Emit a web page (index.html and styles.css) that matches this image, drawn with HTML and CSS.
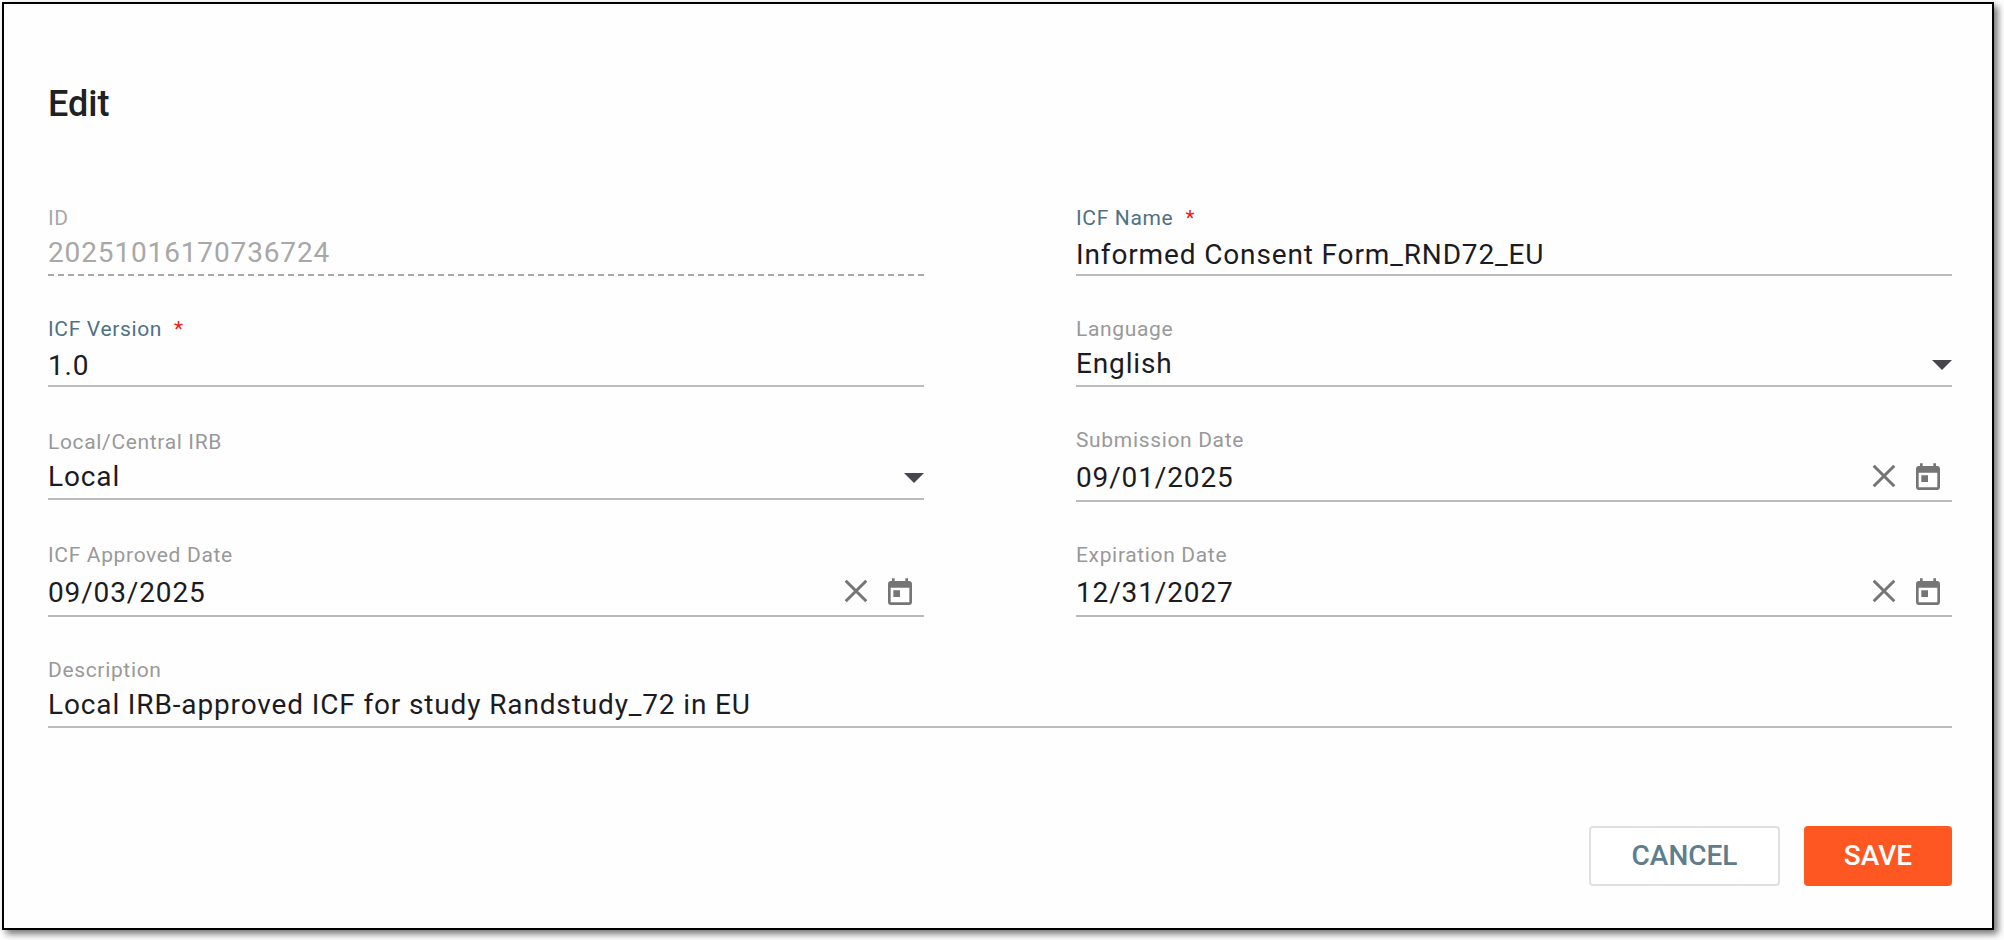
FILE: index.html
```
<!DOCTYPE html>
<html lang="en">
<head>
    <meta charset="UTF-8">
    <meta name="viewport" content="width=device-width, initial-scale=1.0">
    <title>Edit</title>
    <link rel="stylesheet" href="styles.css">
</head>
<body>
    <!-- Icons -->
    <svg class="sprite" width="0" height="0">
        <symbol id="icon-arrow" viewBox="0 0 20 10"><path d="M0 0h20L10 10z"/></symbol>
        <symbol id="icon-clear" viewBox="0 0 32 32"><path d="M5.7 3.7l20.6 20.6M26.3 3.7L5.7 24.3" fill="none" stroke="currentColor" stroke-width="3"/></symbol>
        <symbol id="icon-today" viewBox="0 0 24 24"><path d="M19 3h-1V1h-2v2H8V1H6v2H5c-1.11 0-1.99.9-1.99 2L3 19c0 1.1.89 2 2 2h14c1.1 0 2-.9 2-2V5c0-1.1-.9-2-2-2zm0 16H5V8h14v11zM7 10h5v5H7z"/></symbol>
    </svg>

    <main class="dialog">
        <h1 class="title">Edit</h1>

        <div class="form">
            <div class="field disabled">
                <div class="label">ID</div>
                <div class="control">20251016170736724</div>
            </div>
            <div class="field input required">
                <div class="label">ICF Name<span class="star">*</span></div>
                <div class="control">Informed Consent Form_RND72_EU</div>
            </div>

            <div class="field input required">
                <div class="label">ICF Version<span class="star">*</span></div>
                <div class="control">1.0</div>
            </div>
            <div class="field select">
                <div class="label">Language</div>
                <div class="control">English<svg class="arrow"><use href="#icon-arrow"/></svg></div>
            </div>

            <div class="field select">
                <div class="label">Local/Central IRB</div>
                <div class="control">Local<svg class="arrow"><use href="#icon-arrow"/></svg></div>
            </div>
            <div class="field date">
                <div class="label">Submission Date</div>
                <div class="control">
                    09/01/2025
                    <div class="icons">
                        <svg><use href="#icon-clear"/></svg>
                        <svg><use href="#icon-today"/></svg>
                    </div>
                </div>
            </div>

            <div class="field date">
                <div class="label">ICF Approved Date</div>
                <div class="control">
                    09/03/2025
                    <div class="icons">
                        <svg><use href="#icon-clear"/></svg>
                        <svg><use href="#icon-today"/></svg>
                    </div>
                </div>
            </div>
            <div class="field date">
                <div class="label">Expiration Date</div>
                <div class="control">
                    12/31/2027
                    <div class="icons">
                        <svg><use href="#icon-clear"/></svg>
                        <svg><use href="#icon-today"/></svg>
                    </div>
                </div>
            </div>

            <div class="field wide">
                <div class="label">Description</div>
                <div class="control">Local IRB-approved ICF for study Randstudy_72 in EU</div>
            </div>
        </div>

        <div class="actions">
            <button type="button" class="btn btn-cancel">CANCEL</button>
            <button type="button" class="btn btn-save">SAVE</button>
        </div>
    </main>
</body>
</html>
```
FILE: styles.css
```
* {
    box-sizing: border-box;
}
body {
    margin: 0;
    padding: 2px 10px 10px 2px;
    height: 940px;
    overflow: hidden;
    background-color: #fff;
    font-family: Roboto, sans-serif;
    color: #1c1b1f;
}
.sprite {
    position: absolute;
}
.dialog {
    height: 928px;
    padding: 79px 40px 0 44px;
    border: 2px solid #000;
    background-color: #fefefe;
    box-shadow: 4px 4px 7px rgba(0, 0, 0, 0.55);
}
.title {
    margin: 0 0 81px;
    font-size: 36px;
    line-height: 42px;
    font-weight: 500;
    color: #212121;
}

/* Form grid */
.form {
    display: grid;
    grid-template-columns: 1fr 1fr;
    column-gap: 152px;
    row-gap: 41px;
    align-items: center;
}
.wide {
    grid-column: 1 / -1;
}
.label {
    font-size: 21px;
    line-height: 24px;
    letter-spacing: 0.656px;
    color: #999;
}
.control {
    display: flex;
    justify-content: space-between;
    padding: 7px 0 5px;
    border-bottom: 2px solid #bbb;
    font-size: 28px;
    line-height: 32px;
    letter-spacing: 0.86px;
}
.input .control {
    padding: 9px 0 3px;
}
.date .control {
    padding: 10px 8px 6px 0;
}
.required .label {
    color: #4f7184;
}
.star {
    margin-left: 12px;
    color: #f01818;
}
.disabled .label,
.disabled .control {
    color: #a8a8a8;
}
.disabled .control {
    border-bottom: 0;
    padding-bottom: 7px;
    background: repeating-linear-gradient(90deg, #a8a8a8 0 6px, transparent 6px 10px) left bottom / 100% 2px no-repeat;
}
.arrow {
    width: 20px;
    height: 10px;
    margin-top: 12px;
    fill: #46464f;
}
.icons {
    display: flex;
    gap: 12px;
    height: 32px;
    color: #757575;
}
.icons svg {
    width: 32px;
    height: 32px;
    fill: currentColor;
}

/* Buttons */
.actions {
    display: flex;
    justify-content: flex-end;
    gap: 24px;
    margin-top: 98px;
}
.btn {
    height: 60px;
    padding: 0 0 2px;
    border: none;
    border-radius: 4px;
    font-family: inherit;
    font-size: 28px;
    font-weight: 500;
}
.btn-cancel {
    width: 191px;
    border: 2px solid #e0e0e0;
    background-color: #fff;
    color: #607d8b;
}
.btn-save {
    width: 148px;
    background-color: #ff5722;
    color: #fff;
}
```
